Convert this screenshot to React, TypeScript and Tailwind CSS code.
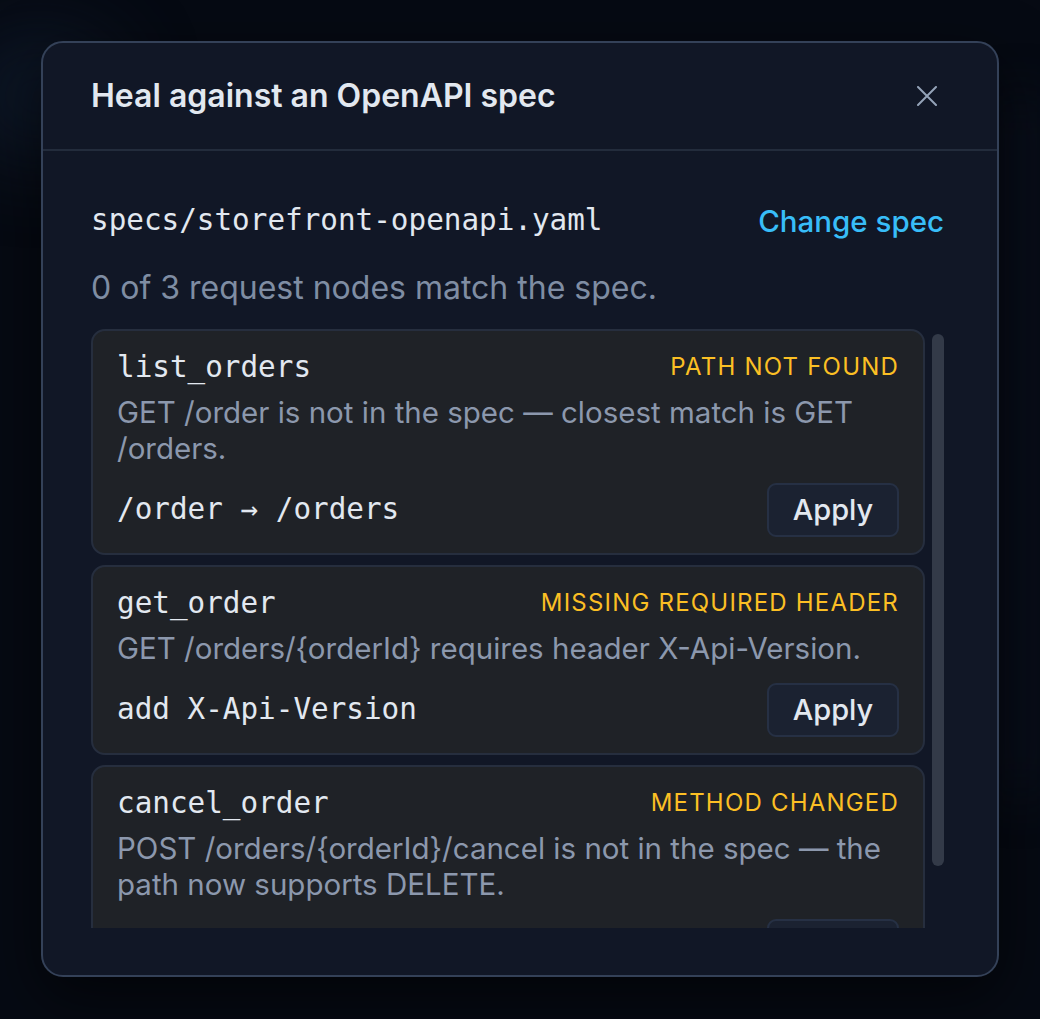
type Issue = {
  node: string;
  kind: string;
  message: string;
  fix: string;
};

const issues: Issue[] = [
  {
    node: "list_orders",
    kind: "Path not found",
    message: "GET /order is not in the spec — closest match is GET /orders.",
    fix: "/order → /orders",
  },
  {
    node: "get_order",
    kind: "Missing required header",
    message: "GET /orders/{orderId} requires header X-Api-Version.",
    fix: "add X-Api-Version",
  },
  {
    node: "cancel_order",
    kind: "Method changed",
    message:
      "POST /orders/{orderId}/cancel is not in the spec — the path now supports DELETE.",
    fix: "POST → DELETE",
  },
];

const sans = "font-['Inter','Noto_Sans',sans-serif]";
const mono = "font-['DejaVu_Sans_Mono','Liberation_Mono',monospace]";

function IssueCard({ issue }: { issue: Issue }) {
  return (
    <div className="shrink-0 rounded-[14px] border-2 border-[#262e3e] bg-[#1f2227] px-[24px] pt-[18px] pb-[16px]">
      <div className="flex h-[36px] items-center justify-between">
        <span className={`${mono} text-[29.3px] leading-[36px] text-[#e2e8f0]`}>
          {issue.node}
        </span>
        <span
          className={`${sans} text-[24px] uppercase leading-[36px] tracking-[0.05em] text-[#fbbf24]`}
        >
          {issue.kind}
        </span>
      </div>
      <p className={`${sans} mt-[9px] text-[29.5px] leading-[36px] text-[#8c98ad]`}>
        {issue.message}
      </p>
      <div className="mt-[17px] flex items-center justify-between">
        <span className={`${mono} text-[29.3px] text-[#e2e8f0]`}>{issue.fix}</span>
        <button
          className={`${sans} h-[54px] w-[132px] rounded-[9px] border-2 border-[#263044] bg-[#1b2231] text-[29px] font-medium text-[#e2e8f0]`}
        >
          Apply
        </button>
      </div>
    </div>
  );
}

export default function App() {
  return (
    <div className="relative flex min-h-screen w-full justify-center overflow-hidden bg-[#060a13] pt-[41px]">
      {/* dimmed page glow behind the overlay */}
      <div className="pointer-events-none absolute inset-0">
        <div className="absolute -left-10 top-8 h-32 w-40 rounded-full bg-[#14243a]/50 blur-2xl" />
        <div className="absolute right-0 top-24 h-[700px] w-10 bg-[#0b1322]/60 blur-xl" />
      </div>

      <div className="relative flex h-[936px] w-[958px] flex-col rounded-[22px] border-2 border-[#344158] bg-[#111726] shadow-[0_20px_60px_rgba(0,0,0,0.6)]">
        {/* header */}
        <div className="flex h-[108px] shrink-0 items-center justify-between border-b-2 border-[#232c3c] pl-[48px] pr-[50px]">
          <h2 className={`${sans} text-[32px] font-semibold text-[#e2e8f0]`}>
            Heal against an OpenAPI spec
          </h2>
          <button className="grid h-[40px] w-[40px] place-items-center text-[#94a3b8]">
            <svg
              width="20"
              height="20"
              viewBox="0 0 20 20"
              fill="none"
              stroke="currentColor"
              strokeWidth="2"
              strokeLinecap="round"
            >
              <path d="M1 1l18 18M19 1L1 19" />
            </svg>
          </button>
        </div>

        {/* body */}
        <div className="flex min-h-0 flex-1 flex-col pl-[48px] pr-[53px] pb-[47px] pt-[52px]">
          <div className="flex h-[36px] items-center justify-between">
            <span className={`${mono} text-[29.3px] text-[#e2e8f0]`}>
              specs/storefront-openapi.yaml
            </span>
            <button className={`${sans} text-[29.5px] font-medium text-[#38bdf8]`}>
              Change spec
            </button>
          </div>
          <p className={`${sans} mt-[31px] text-[32px] leading-[36px] text-[#7f8da3]`}>
            0 of 3 request nodes match the spec.
          </p>

          <div className="mt-[23px] flex min-h-0 flex-1 gap-[7px]">
            <div className="flex min-h-0 flex-1 flex-col gap-[10px] overflow-hidden">
              {issues.map((issue) => (
                <IssueCard key={issue.node} issue={issue} />
              ))}
            </div>
            {/* scrollbar */}
            <div className="w-[12px] shrink-0 pt-[5px]">
              <div className="h-[532px] w-full rounded-full bg-[#333a48]" />
            </div>
          </div>
        </div>
      </div>
    </div>
  );
}
